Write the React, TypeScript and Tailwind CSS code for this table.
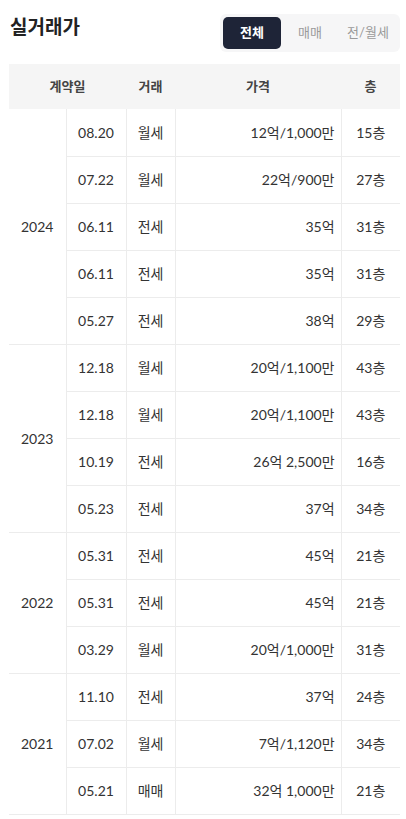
import React from "react";

type Deal = { date: string; kind: string; price: string; floor: string };

const groups: { year: string; deals: Deal[] }[] = [
  {
    year: "2024",
    deals: [
      { date: "08.20", kind: "월세", price: "12억/1,000만", floor: "15층" },
      { date: "07.22", kind: "월세", price: "22억/900만", floor: "27층" },
      { date: "06.11", kind: "전세", price: "35억", floor: "31층" },
      { date: "06.11", kind: "전세", price: "35억", floor: "31층" },
      { date: "05.27", kind: "전세", price: "38억", floor: "29층" },
    ],
  },
  {
    year: "2023",
    deals: [
      { date: "12.18", kind: "월세", price: "20억/1,100만", floor: "43층" },
      { date: "12.18", kind: "월세", price: "20억/1,100만", floor: "43층" },
      { date: "10.19", kind: "전세", price: "26억 2,500만", floor: "16층" },
      { date: "05.23", kind: "전세", price: "37억", floor: "34층" },
    ],
  },
  {
    year: "2022",
    deals: [
      { date: "05.31", kind: "전세", price: "45억", floor: "21층" },
      { date: "05.31", kind: "전세", price: "45억", floor: "21층" },
      { date: "03.29", kind: "월세", price: "20억/1,000만", floor: "31층" },
    ],
  },
  {
    year: "2021",
    deals: [
      { date: "11.10", kind: "전세", price: "37억", floor: "24층" },
      { date: "07.02", kind: "월세", price: "7억/1,120만", floor: "34층" },
      { date: "05.21", kind: "매매", price: "32억 1,000만", floor: "21층" },
    ],
  },
];

const tabs = ["전체", "매매", "전/월세"];

export default function App() {
  return (
    <div className="w-[406px] bg-white font-['Lato','Noto_Sans_CJK_KR',sans-serif] text-[#333]">
      {/* title + filter */}
      <div className="flex items-start justify-between pl-[10px] pr-[6px] pt-[14px]">
        <h2 className="text-[19px] font-bold leading-[26px] text-[#222]">실거래가</h2>
        <div className="flex items-center rounded-[6px] bg-[#f6f6f7] p-[3px]">
          {tabs.map((t, i) => (
            <button
              key={t}
              className={`h-[32px] w-[58px] rounded-[5px] text-[13px] ${
                i === 0 ? "bg-[#1e2437] font-bold text-white" : "text-[#9a9a9a]"
              }`}
            >
              {t}
            </button>
          ))}
        </div>
      </div>

      <table className="mt-[12px] ml-[9px] w-[391px] table-fixed border-collapse text-[14px]">
        <colgroup>
          <col className="w-[57px]" />
          <col className="w-[60px]" />
          <col className="w-[49px]" />
          <col className="w-[166px]" />
          <col className="w-[59px]" />
        </colgroup>
        <thead>
          <tr className="h-[45px] bg-[#f5f5f5] text-[13px] font-bold text-[#444]">
            <th colSpan={2} className="font-bold">계약일</th>
            <th className="font-bold">거래</th>
            <th className="font-bold">가격</th>
            <th className="font-bold">층</th>
          </tr>
        </thead>
        <tbody>
          {groups.map((g) =>
            g.deals.map((d, i) => (
              <tr key={g.year + i} className="h-[47px]">
                {i === 0 && (
                  <td
                    rowSpan={g.deals.length}
                    className="border-r border-b border-[#ececec] text-center"
                  >
                    {g.year}
                  </td>
                )}
                <td className="border-r border-b border-[#ececec] text-center">{d.date}</td>
                <td className="border-r border-b border-[#ececec] text-center">{d.kind}</td>
                <td className="border-r border-b border-[#ececec] pr-[6px] text-right">{d.price}</td>
                <td className="border-b border-[#ececec] text-center">{d.floor}</td>
              </tr>
            ))
          )}
        </tbody>
      </table>
    </div>
  );
}
